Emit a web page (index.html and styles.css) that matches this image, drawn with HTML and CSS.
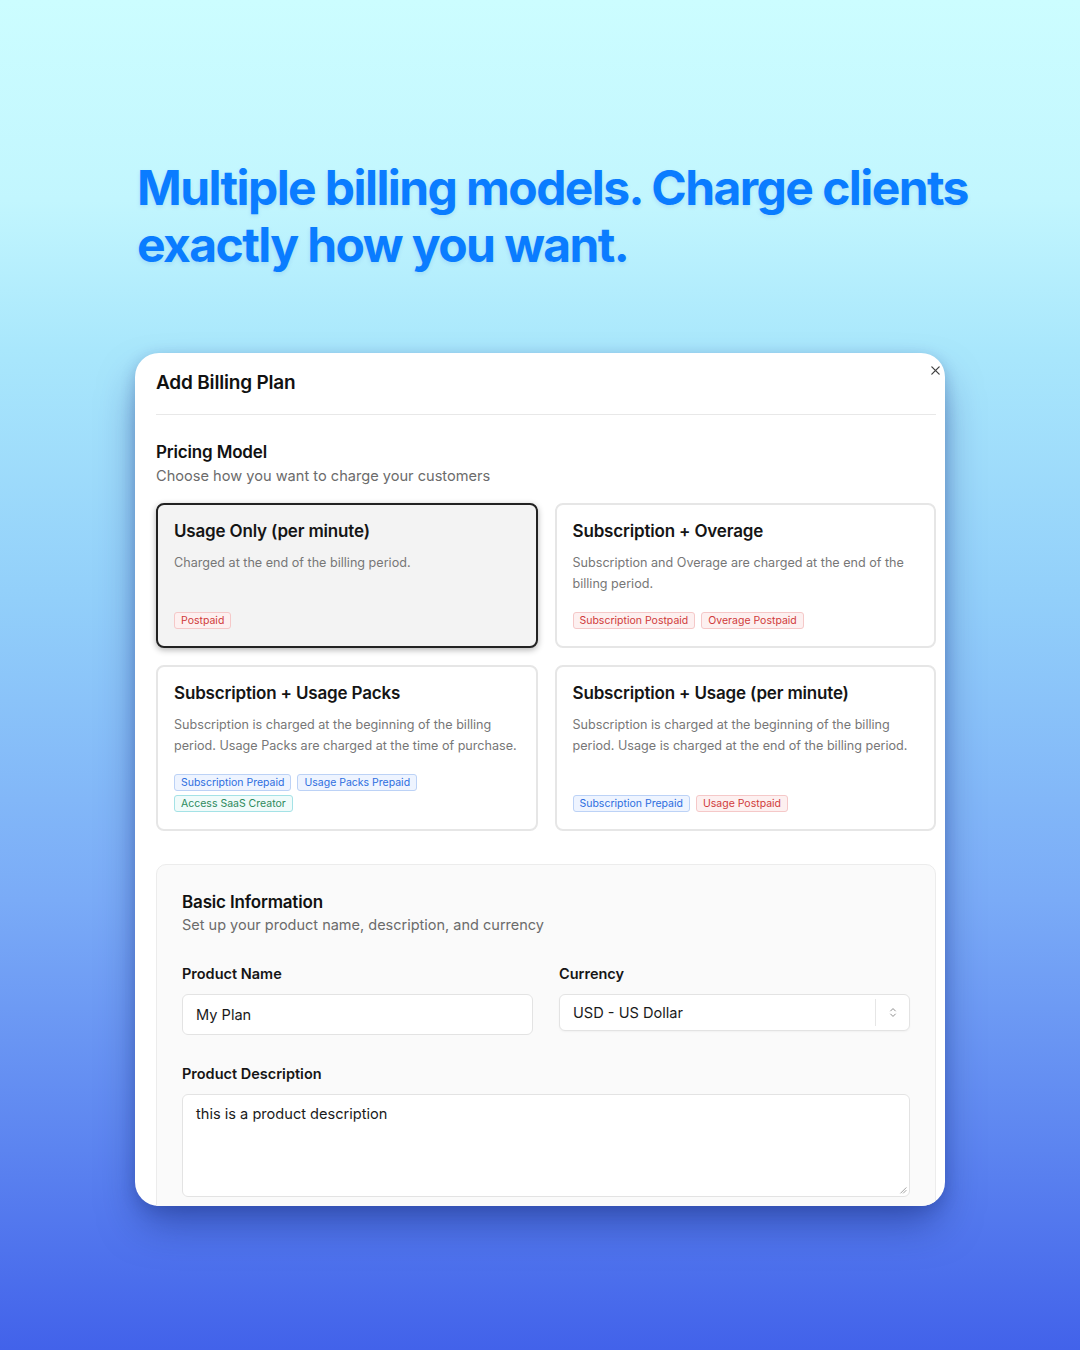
FILE: index.html
```html
<!DOCTYPE html>
<html lang="en">
<head>
<meta charset="utf-8">
<title>Add Billing Plan</title>
<link rel="stylesheet" href="styles.css">
</head>
<body>
<main class="page">
  <h1 class="headline">Multiple billing models. Charge clients exactly how you want.</h1>

  <section class="modal">
    <button class="close" aria-label="Close">
      <svg viewBox="0 0 12 12" width="11" height="11"><path d="M2 2L10 10M10 2L2 10" stroke="#444" stroke-width="1.4" stroke-linecap="round"/></svg>
    </button>
    <h2 class="modal-title">Add Billing Plan</h2>
    <hr class="divider">

    <div class="section-head">
      <h3 class="section-title">Pricing Model</h3>
      <p class="section-sub">Choose how you want to charge your customers</p>
    </div>

    <div class="cards">
      <div class="card selected">
        <div class="card-title">Usage Only (per minute)</div>
        <div class="card-desc">Charged at the end of the billing period.</div>
        <div class="tags">
          <span class="tag red">Postpaid</span>
        </div>
      </div>
      <div class="card">
        <div class="card-title">Subscription + Overage</div>
        <div class="card-desc">Subscription and Overage are charged at the end of the billing period.</div>
        <div class="tags">
          <span class="tag red">Subscription Postpaid</span>
          <span class="tag red">Overage Postpaid</span>
        </div>
      </div>
      <div class="card">
        <div class="card-title">Subscription + Usage Packs</div>
        <div class="card-desc">Subscription is charged at the beginning of the billing period. Usage Packs are charged at the time of purchase.</div>
        <div class="tags">
          <span class="tag blue">Subscription Prepaid</span>
          <span class="tag blue">Usage Packs Prepaid</span>
          <span class="tag green">Access SaaS Creator</span>
        </div>
      </div>
      <div class="card">
        <div class="card-title">Subscription + Usage (per minute)</div>
        <div class="card-desc">Subscription is charged at the beginning of the billing period. Usage is charged at the end of the billing period.</div>
        <div class="tags">
          <span class="tag blue">Subscription Prepaid</span>
          <span class="tag red">Usage Postpaid</span>
        </div>
      </div>
    </div>

    <div class="info">
      <h3 class="info-title">Basic Information</h3>
      <p class="info-sub">Set up your product name, description, and currency</p>

      <div class="fields">
        <div class="field">
          <label class="label">Product Name</label>
          <div class="input">My Plan</div>
        </div>
        <div class="field">
          <label class="label">Currency</label>
          <div class="select">
            <span class="select-value">USD - US Dollar</span>
            <span class="select-arrow">
              <svg viewBox="0 0 10 14" width="8" height="11"><path d="M2 5L5 2L8 5M2 9L5 12L8 9" fill="none" stroke="#888" stroke-width="1.2" stroke-linecap="round" stroke-linejoin="round"/></svg>
            </span>
          </div>
        </div>
      </div>

      <div class="field full">
        <label class="label">Product Description</label>
        <div class="textarea">this is a product description
          <svg class="grip" viewBox="0 0 10 10" width="9" height="9"><path d="M9 3L3 9M9 6L6 9" stroke="#999" stroke-width="1" stroke-linecap="round"/></svg>
        </div>
      </div>
    </div>
  </section>
</main>
</body>
</html>
```

FILE: styles.css
```css
* { box-sizing: border-box; }

html, body {
  margin: 0;
  padding: 0;
}

body {
  width: 1080px;
  height: 1350px;
  overflow: hidden;
  font-family: Inter, "Noto Sans", "Liberation Sans", sans-serif;
  color: #111;
  background: linear-gradient(180deg,
    #ccfdff 0px,
    #c2f6fe 200px,
    #a9e7fc 350px,
    #92cffa 600px,
    #7aabf7 900px,
    #5c84f0 1150px,
    #4262ea 1350px);
}

.page {
  padding: 159px 0 0 135px;
}

.headline {
  margin: 0;
  width: 860px;
  font-size: 48px;
  line-height: 57px;
  font-weight: 700;
  letter-spacing: -0.033em;
  color: #0a7cff;
  padding-left: 2px;
  text-shadow: 0 2px 4px rgba(0, 90, 200, 0.12);
}

.modal {
  position: relative;
  margin-top: 80px;
  width: 810px;
  height: 853px;
  background: #fff;
  border-radius: 24px;
  overflow: hidden;
  padding: 17px 9px 0 21px;
  box-shadow: 0 22px 40px -6px rgba(25, 45, 130, 0.55), 0 4px 14px rgba(30, 60, 140, 0.25);
}

.close {
  position: absolute;
  top: 10px;
  right: 3px;
  width: 14px;
  height: 14px;
  padding: 0;
  border: 0;
  background: transparent;
  display: flex;
  align-items: center;
  justify-content: center;
}

.modal-title {
  margin: 0;
  font-size: 19px;
  line-height: 26px;
  font-weight: 600;
  letter-spacing: -0.01em;
}

.divider {
  margin: 18px 0 0 0;
  border: 0;
  border-top: 1.5px solid #e8e8e8;
}

.section-head {
  margin-top: 26px;
}

.section-title {
  margin: 0;
  font-size: 17px;
  line-height: 22px;
  font-weight: 600;
  letter-spacing: -0.01em;
}

.section-sub {
  margin: 2px 0 0 0;
  font-size: 14.6px;
  line-height: 22px;
  color: #6b6b6b;
}

.cards {
  margin-top: 16px;
  display: grid;
  grid-template-columns: 1fr 1fr;
  column-gap: 17px;
  row-gap: 17px;
}

.card {
  display: flex;
  flex-direction: column;
  border: 2px solid #e6e6e6;
  border-radius: 8px;
  background: #fff;
  padding: 15px 16px 17px 16px;
}

.card.selected {
  border-color: #222;
  background: #f3f3f3;
  box-shadow: 0 2px 6px rgba(0, 0, 0, 0.3);
}

.card-title {
  font-size: 17px;
  line-height: 22px;
  font-weight: 600;
  letter-spacing: -0.01em;
  color: #151515;
}

.card-desc {
  margin-top: 10px;
  font-size: 12.6px;
  line-height: 21px;
  color: #777;
}

.tags {
  margin-top: auto;
  padding-top: 18px;
  display: flex;
  flex-wrap: wrap;
  gap: 4px 6px;
}

.tag {
  display: inline-block;
  height: 17px;
  line-height: 15px;
  font-size: 10.5px;
  padding: 0 6px;
  border-radius: 3px;
  border: 1px solid;
}

.tag.red {
  color: #d03b3b;
  background: #fdf0f0;
  border-color: #f5c8c8;
}

.tag.blue {
  color: #2d6ee0;
  background: #eef4ff;
  border-color: #bcd2f6;
}

.tag.green {
  color: #2c8a5c;
  background: #f0fbfa;
  border-color: #a4e2e6;
}

.info {
  margin-top: 33px;
  background: #fafafa;
  border: 1px solid #ececec;
  border-radius: 10px;
  padding: 25px 25px 40px 25px;
}

.info-title {
  margin: 0;
  font-size: 17px;
  line-height: 24px;
  font-weight: 600;
  letter-spacing: -0.01em;
}

.info-sub {
  margin: 0;
  font-size: 14.5px;
  line-height: 22px;
  color: #6b6b6b;
}

.fields {
  display: grid;
  grid-template-columns: 1fr 1fr;
  column-gap: 26px;
  margin-top: 28px;
}

.field {
  display: flex;
  flex-direction: column;
}

.field.full {
  margin-top: 29px;
}

.label {
  font-size: 14.5px;
  line-height: 20px;
  font-weight: 600;
  color: #151515;
  margin-bottom: 10px;
}

.input {
  height: 41px;
  border: 1px solid #e3e3e3;
  border-radius: 6px;
  background: #fff;
  padding: 0 13px;
  display: flex;
  align-items: center;
  font-size: 14.6px;
  color: #1a1a1a;
}

.select {
  height: 37px;
  border: 1px solid #e3e3e3;
  border-radius: 6px;
  background: #fff;
  display: flex;
  align-items: center;
  font-size: 14.6px;
  color: #1a1a1a;
  box-shadow: 0 1px 2px rgba(0, 0, 0, 0.04);
}

.select-value {
  flex: 1;
  padding-left: 13px;
}

.select-arrow {
  width: 34px;
  height: 27px;
  border-left: 1px solid #e6e6e6;
  display: flex;
  align-items: center;
  justify-content: center;
}

.textarea {
  position: relative;
  height: 103px;
  border: 1px solid #e3e3e3;
  border-radius: 6px;
  background: #fff;
  padding: 9px 13px;
  font-size: 14.6px;
  line-height: 20px;
  color: #1a1a1a;
}

.grip {
  position: absolute;
  right: 2px;
  bottom: 2px;
}
```
